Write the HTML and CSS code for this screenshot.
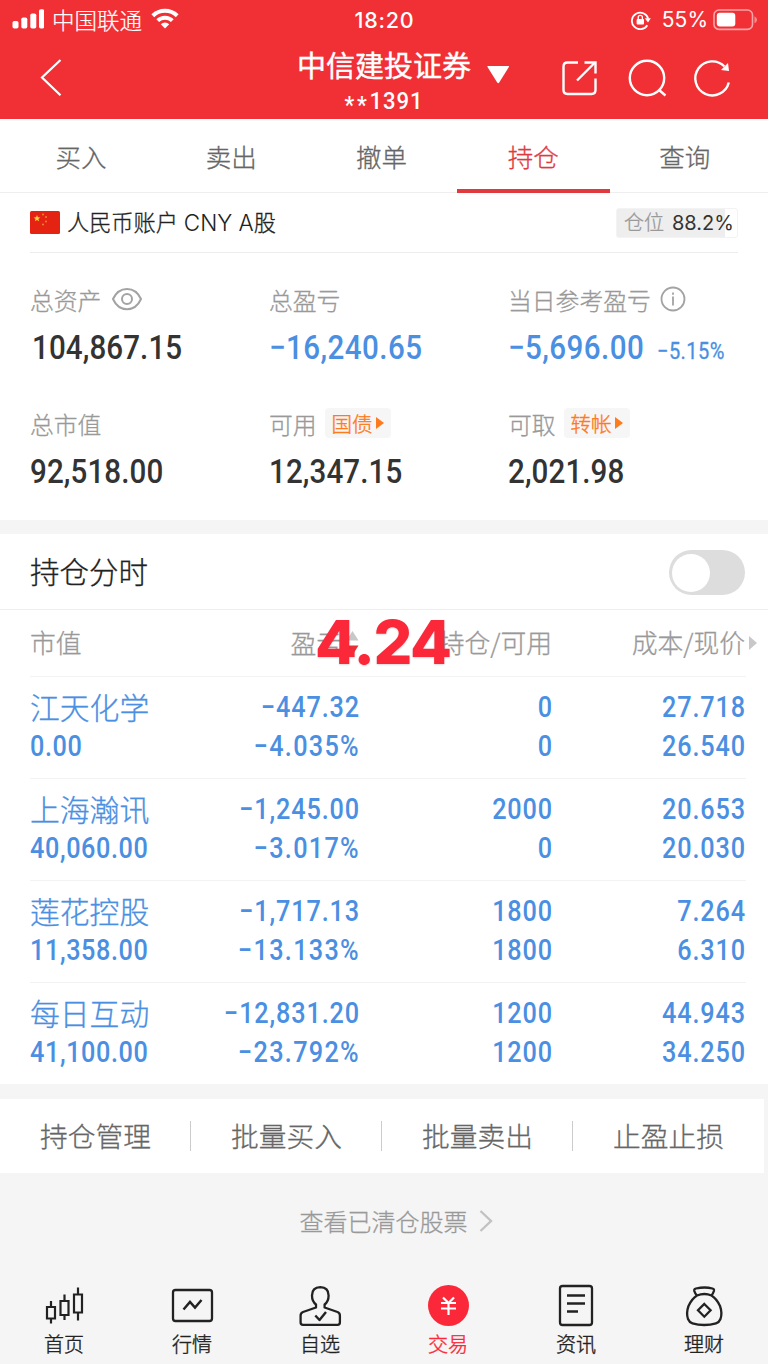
FILE: index.html
```html
<!DOCTYPE html>
<html lang="zh-CN">
<head>
<meta charset="utf-8">
<title>持仓</title>
<link rel="stylesheet" href="styles.css">
</head>
<body>
<div class="app">
  <header class="header">
    <div class="status">
      <div class="status-left">
        <svg class="ic" width="32" height="20" viewBox="12 9 32 20" fill="#fff"><rect x="12.5" y="21" width="6" height="7.5" rx="1.8"/><rect x="21.3" y="17.5" width="6" height="11" rx="1.8"/><rect x="30.3" y="13.5" width="6" height="15" rx="1.8"/><rect x="39" y="9.3" width="5.3" height="19.2" rx="1.8"/></svg>
        <span class="carrier">中国联通</span>
        <svg class="wifi" width="28" height="21" viewBox="0 0 28 21" fill="none" stroke="#fff" stroke-width="4"><path d="M1.8 7.7a17.5 17.5 0 0 1 24.4 0"/><path d="M6.7 12.6a10.5 10.5 0 0 1 14.6 0"/><path d="M14 20.5l-4.2-4.3a6 6 0 0 1 8.4 0z" fill="#fff" stroke="none"/></svg>
      </div>
      <div class="clock">18:20</div>
      <div class="status-right">
        <svg class="ic" width="20" height="20" viewBox="0 0 20 20" fill="none" stroke="#fff" stroke-width="1.8"><path d="M16.300 15.200A8.300 8.300 0 1 1 17.200 8.700"/><path d="M13.800 8.200h6l-2.800 4.200z" fill="#fff" stroke="none"/><rect x="5.600" y="9" width="7.400" height="5.600" rx="1" fill="#fff" stroke="none"/><path d="M7.200 9V7.400a2.100 2.100 0 0 1 4.200 0V9" stroke-width="1.300"/></svg>
        <span class="percent">55%</span>
        <svg class="ic" width="44" height="22" viewBox="0 0 44 22" fill="none"><rect x="1" y="1" width="38.500" height="19.400" rx="5" stroke="#fba3a6" stroke-width="1.600"/><rect x="3.800" y="3.800" width="18.500" height="13.800" rx="3" fill="#fff"/><path d="M41.500 7.200v7q2.500-1 2.500-3.500t-2.500-3.500z" fill="#f98f93"/></svg>
      </div>
    </div>
    <div class="nav">
      <svg class="back" width="24" height="40" viewBox="40 58 24 40" fill="none" stroke="#fff" stroke-width="2.2"><path d="M60.5 60L42 77.5 60.5 95.3"/></svg>
      <div class="title">
        <div class="broker">中信建投证券</div>
        <div class="acct"><span class="stars">**</span>1391</div>
      </div>
      <svg class="caret" width="24" height="20" viewBox="486 64 24 20"><path d="M488 66h20.500q1 0 .4 1l-9.700 15.600q-1 1.300-2 0l-9.700-15.600q-.6-1 .5-1z" fill="#fff"/></svg>
      <svg class="tools" width="172" height="42" viewBox="560 58 172 42" fill="none" stroke="#fff" stroke-width="2.4"><path d="M578 62.500h-10.500q-4 0-4 4v23.500q0 4 4 4h24q4 0 4-4V78.500"/><path d="M577 80.500L594.500 63"/><path d="M584.500 62.500h11v11"/><circle cx="647" cy="78" r="17.200"/><path d="M658.500 89.500l7 6"/><path d="M728.800 82.500A17 17 0 1 1 724.500 66.500"/><path d="M721 70l1.500-1.500 5.500-5.500 1 8z" fill="#fff" stroke="none"/></svg>
    </div>
  </header>

  <nav class="tabs">
    <div class="tab">买入</div><div class="tab">卖出</div><div class="tab">撤单</div><div class="tab tab-on">持仓</div><div class="tab">查询</div>
  </nav>

  <section class="account">
    <svg class="flag" width="30" height="23" viewBox="0 0 30 23"><rect width="30" height="23" rx="1.500" fill="#e42313"/><path d="M7 4l.9 2.300 2.500.1-2 1.500.7 2.400L7 8.900l-2.100 1.400.7-2.400-2-1.500 2.500-.1z" fill="#ffd53a"/><g fill="#ee8a25"><circle cx="13" cy="3.500" r="1"/><circle cx="16" cy="6" r="1"/><circle cx="16" cy="10.500" r="1"/><circle cx="13" cy="13.500" r="1"/></g></svg>
    <span class="account-name">人民币账户 <span class="latin">CNY A</span>股</span>
    <span class="position"><span class="position-label">仓位</span><span class="position-value">88.2%</span></span>
  </section>

  <section class="stats">
    <div class="stat"><div class="label">总资产<svg class="eye" width="30" height="24" viewBox="0 0 30 24" fill="none" stroke="#a3a3a3" stroke-width="2"><path d="M1 12C7-1.500 23-1.500 29 12 23 25.500 7 25.500 1 12z"/><circle cx="15" cy="12" r="5"/></svg></div><div class="amount"><span class="num num-total">104,867.15</span></div></div>
    <div class="stat"><div class="label">总盈亏</div><div class="amount loss"><span class="num">−16,240.65</span></div></div>
    <div class="stat"><div class="label">当日参考盈亏<svg class="info" width="26" height="26" viewBox="0 0 26 26" fill="none" stroke="#a3a3a3" stroke-width="1.800"><circle cx="13" cy="13" r="11.500"/><path d="M13 10.500v9M13 6.500v2.200"/></svg></div><div class="amount loss"><span class="num num-day">−5,696.00</span><span class="num pct">−5.15%</span></div></div>
    <div class="stat"><div class="label">总市值</div><div class="amount"><span class="num">92,518.00</span></div></div>
    <div class="stat"><div class="label">可用<span class="chip">国债<i class="chip-arrow"></i></span></div><div class="amount"><span class="num">12,347.15</span></div></div>
    <div class="stat"><div class="label">可取<span class="chip">转帐<i class="chip-arrow"></i></span></div><div class="amount"><span class="num">2,021.98</span></div></div>
  </section>

  <section class="switch-row">
    <span class="switch-label">持仓分时</span>
    <span class="switch"><span class="knob"></span></span>
  </section>

  <section class="table">
    <div class="row head">
      <div class="cell">市值</div>
      <div class="cell sort">盈亏<svg class="sorter" width="13" height="26" viewBox="0 0 13 26"><path d="M6.500 1l6 9.500H.5z" fill="#c8c8c8"/><path d="M6.500 25l6-9.500H.5z" fill="#e8303a"/></svg></div>
      <div class="cell">持仓/可用</div>
      <div class="cell">成本/现价<i class="more"></i></div>
      <div class="overlay">4.24</div>
    </div>
    <div class="row">
      <div class="cell"><div class="name">江天化学</div><div class="val">0.00</div></div>
      <div class="cell"><div class="val">−447.32</div><div class="val rate">−4.035%</div></div>
      <div class="cell"><div class="val">0</div><div class="val">0</div></div>
      <div class="cell"><div class="val">27.718</div><div class="val">26.540</div></div>
    </div>
    <div class="row">
      <div class="cell"><div class="name">上海瀚讯</div><div class="val">40,060.00</div></div>
      <div class="cell"><div class="val">−1,245.00</div><div class="val rate">−3.017%</div></div>
      <div class="cell"><div class="val">2000</div><div class="val">0</div></div>
      <div class="cell"><div class="val">20.653</div><div class="val">20.030</div></div>
    </div>
    <div class="row">
      <div class="cell"><div class="name">莲花控股</div><div class="val">11,358.00</div></div>
      <div class="cell"><div class="val">−1,717.13</div><div class="val rate">−13.133%</div></div>
      <div class="cell"><div class="val">1800</div><div class="val">1800</div></div>
      <div class="cell"><div class="val">7.264</div><div class="val">6.310</div></div>
    </div>
    <div class="row">
      <div class="cell"><div class="name">每日互动</div><div class="val">41,100.00</div></div>
      <div class="cell"><div class="val">−12,831.20</div><div class="val rate">−23.792%</div></div>
      <div class="cell"><div class="val">1200</div><div class="val">1200</div></div>
      <div class="cell"><div class="val">44.943</div><div class="val">34.250</div></div>
    </div>
  </section>

  <section class="actions">
    <div class="action">持仓管理</div><div class="action">批量买入</div><div class="action">批量卖出</div><div class="action">止盈止损</div>
  </section>

  <div class="cleared">查看已清仓股票<svg width="14" height="24" viewBox="0 0 14 24" fill="none" stroke="#c2c2c2" stroke-width="2.400"><path d="M1.500 2L12 12 1.500 22"/></svg></div>

  <footer class="tabbar">
    <div class="item"><svg width="44" height="44" viewBox="42 1284 44 44" fill="none" stroke="#222" stroke-width="2.200"><path d="M47 1307h8v11.500h-8zM51 1301v6M51 1318.500v5M60.500 1301h8v14h-8zM64.500 1294.500v6.500M64.500 1315v5M74 1294.500h8v18h-8zM78 1287.500v7M78 1312.500v8"/></svg><span>首页</span></div>
    <div class="item"><svg width="44" height="44" viewBox="170 1284 44 44" fill="none" stroke="#222" stroke-width="2.300"><rect x="173" y="1290" width="39" height="31" rx="2.500"/><path d="M183.500 1309.500l6.500-7.500 5 5.500 6.500-7.500" stroke-width="2.500"/></svg><span>行情</span></div>
    <div class="item"><svg width="44" height="44" viewBox="298 1284 44 44" fill="none" stroke="#222" stroke-width="2.300" stroke-linejoin="round"><path d="M316 1307.500v-3q-4-3-4-9 0-8 8.300-8.300 8.300.3 8.300 8.300 0 6-4 9v3l12.900 4.500q2.400 1 2.400 3.500v7q0 2.300-2.300 2.300h-34.700q-2.300 0-2.300-2.300v-7q0-2.500 2.400-3.500z"/><path d="M315.300 1315.500l4.200 4.500 6.500-8" stroke-width="2.400"/></svg><span>自选</span></div>
    <div class="item item-on"><svg width="44" height="44" viewBox="426 1284 44 44" fill="none"><circle cx="448.500" cy="1305.500" r="20.500" fill="#fb2839"/><path d="M443 1297.500l5.500 5.500 5.500-5.500M441 1303h15M441 1308.500h15M448.500 1302.500v12.500" stroke="#fff" stroke-width="2.200"/></svg><span>交易</span></div>
    <div class="item"><svg width="44" height="44" viewBox="554 1284 44 44" fill="none" stroke="#222" stroke-width="2.300"><rect x="560" y="1286" width="32" height="39" rx="2.500"/><path d="M567 1295.500h18M567 1303.500h18M567 1311.500h11"/></svg><span>资讯</span></div>
    <div class="item"><svg width="44" height="44" viewBox="682 1284 44 44" fill="none" stroke="#222" stroke-width="2.300" stroke-linejoin="round"><path d="M697 1295.500q-2-2-2.700-4.500-.4-2 1.600-2.500 9-2 16.500 0 2 .5 1.500 2.500-.7 2.500-2.500 4.500"/><path d="M697 1295.500q7.500-3 14.500 0 5 3 8.500 10.500 2.500 7 .5 13-1.200 3.200-4.500 4.300-5.500 1.700-11.800 1.700t-11.700-1.700q-3.300-1.100-4.500-4.300-2-6 .5-13 3.500-7.500 8.500-10.500z"/><path d="M704.300 1304l6.300 6.300-6.300 6.400-6.300-6.400z" stroke-linejoin="miter"/></svg><span>理财</span></div>
  </footer>
</div>
</body>
</html>
```
FILE: styles.css
```css
* { box-sizing: border-box; }
body { margin: 0; background: #fff; font-family: "Noto Sans CJK SC", sans-serif; font-weight: 300; color: #333; -webkit-text-stroke: .3px currentColor; }
svg { display: block; flex: none; }
.app { width: 768px; height: 1366px; overflow: hidden; }

.header { height: 119px; background: #f03035; color: #fff; }
.status { display: grid; grid-template-columns: 1fr 80px 1fr; height: 40px; align-items: center; padding: 0 11px 2px 12px; -webkit-text-stroke: 0; }
.status-left { display: flex; align-items: center; }
.carrier { font-size: 22.500px; line-height: 30px; margin: 0 9px 0 8px; -webkit-text-stroke: .2px currentColor; }
.wifi { margin-top: -2px; }
.clock { font: 500 21.500px/30px Inter, sans-serif; text-align: center; letter-spacing: .8px; padding-top: 2px; }
.status-right { display: flex; align-items: center; justify-content: flex-end; padding-top: 1px; }
.percent { font: 400 21px/30px Inter, sans-serif; margin: 0 5px 0 11px; }
.nav { display: flex; height: 79px; padding-left: 40px; }
.back { margin-top: 18px; }
.title { width: 180px; margin-left: 230px; text-align: center; margin-top: 4px; }
.broker { font-size: 29px; line-height: 40px; font-weight: 400; white-space: nowrap; -webkit-text-stroke: .4px currentColor; }
.acct { margin-top: 2px; font: 500 24px/30px Roboto, sans-serif; letter-spacing: 1px; transform: scaleX(.92); -webkit-text-stroke: 0; }
.stars { display: inline-block; letter-spacing: 3px; transform: translateY(4px); }
.caret { margin: 24px 0 0 12px; }
.tools { margin: 18px 0 0 50px; }

.tabs { display: flex; height: 74px; border-bottom: 1px solid #eee; padding: 0 8px 0 6px; }
.tab { flex: 1; text-align: center; font-size: 25.500px; line-height: 73px; color: #666; }
.tab-on { flex: 0 0 153px; color: #e03a40; height: 74px; border-bottom: 4px solid #e03a40; }

.account { display: flex; align-items: center; height: 60px; margin: 0 30px; border-bottom: 1px solid #eee; }
.account-name { margin: -2px 0 0 7px; font-size: 22.200px; line-height: 32px; color: #222; white-space: nowrap; }
.latin { margin-left: 1px; font-size: 22.500px; font-family: Inter, sans-serif; -webkit-text-stroke: 0; }
.position { display: flex; align-items: center; width: 122px; height: 30px; margin-left: auto; padding-left: 7px; border: 1px solid #f3f3f3; border-radius: 3px; background: linear-gradient(90deg, #eee 108px, #fff 108px); }
.position-label { font-size: 20px; line-height: 28px; margin-top: -1px; color: #999; }
.position-value { font: 400 20px/28px Inter, sans-serif; margin-left: 8px; -webkit-text-stroke: 0; }

.stats { display: grid; grid-template-columns: 239px 239px 1fr; grid-auto-rows: 124px; height: 267px; padding: 29px 0 0 30px; }
.label { display: flex; align-items: center; height: 34px; font-size: 23.800px; color: #999; white-space: nowrap; }
.eye { margin-left: 11px; }
.info { margin-left: 9px; }
.amount { display: flex; align-items: baseline; height: 44px; margin-top: 9px; }
.num { font: 500 34px/44px Roboto, sans-serif; letter-spacing: .1px; transform: scaleX(.87); transform-origin: 0 50%; white-space: nowrap; -webkit-text-stroke: 0; }
.num-total { margin-left: 2px; }
.loss { color: #4a8fe2; }
.loss .num { letter-spacing: .5px; }
.num-day { width: 149px; }
.loss .pct { font-size: 23px; font-weight: 400; -webkit-text-stroke: .3px currentColor; }
.chip { display: flex; align-items: center; height: 30px; margin-left: 8px; padding: 0 7px; border-radius: 4px; background: #f6f6f6; color: #ff7a1c; font-size: 20.500px; line-height: 28px; -webkit-text-stroke: .4px currentColor; }
.chip-arrow { margin-left: 3px; border: solid transparent; border-width: 6px 0 6px 8px; border-left-color: #ff7a1c; }

.switch-row { display: flex; align-items: center; justify-content: space-between; height: 90px; padding: 0 23px 0 30px; border-top: 14px solid #f5f5f5; border-bottom: 1px solid #eee; font-size: 29.500px; color: #222; }
.switch-label { margin-top: -3px; }
.switch { display: flex; align-items: center; width: 76px; height: 45px; margin-top: 2px; padding-left: 3px; border-radius: 23px; background: #ddd; }
.knob { width: 38px; height: 38px; border-radius: 50%; background: #fff; }

.table { height: 474px; color: #4a8fe2; }
.row { display: grid; grid-template-columns: 160px 169px 193px 193px; height: 102px; margin-left: 30px; width: 716px; border-bottom: 1px solid #f3f3f3; padding-top: 11px; }
.row:last-child { border-bottom: 0; }
.cell { text-align: right; }
.cell:first-child { text-align: left; }
.head { position: relative; height: 67px; padding-top: 0; color: #999; font-size: 25.800px; line-height: 64px; }
.head .cell { position: relative; height: 66px; white-space: nowrap; }
.sort { display: flex; align-items: center; justify-content: flex-end; }
.sorter { margin-left: 4px; }
.more { position: absolute; left: 100%; top: 26px; margin-left: 4px; border: solid transparent; border-width: 7px 0 7px 8px; border-left-color: #c8c8c8; }
.overlay { position: absolute; left: 285px; top: -3px; font: 800 61px/70px Inter, sans-serif; letter-spacing: -1.500px; color: #fb2839; text-shadow: 0 1px 2px rgba(0,0,0,.15); -webkit-text-stroke: 0; }
.name { font-size: 29.800px; line-height: 36px; height: 39px; }
.val { font: 500 29px/39px Roboto, sans-serif; letter-spacing: 1px; margin-right: -1px; transform: scaleX(.87); transform-origin: 100% 50%; white-space: nowrap; -webkit-text-stroke: 0; }
.rate { letter-spacing: 1.500px; }
.cell:first-child .val { transform-origin: 0 50%; letter-spacing: .7px; }

.actions { display: flex; height: 89px; border-top: 15px solid #f5f5f5; padding-right: 4px; background: linear-gradient(90deg, #fff 764px, #f5f5f5 764px); }
.action { flex: 1; display: flex; align-items: center; justify-content: center; padding-bottom: 2px; font-size: 27.700px; line-height: 40px; color: #666; background: linear-gradient(#ccc, #ccc) 100% 50% / 1px 30px no-repeat; }
.action:last-child { background: none; }
.cleared { display: flex; justify-content: center; align-items: center; gap: 11px; height: 97px; padding: 0 0 2px 24px; background: #f5f5f5; font-size: 24px; line-height: 34px; color: #999; }
.tabbar { display: flex; height: 95px; padding-top: 14px; background: #f5f5f5; border-bottom: 1px solid #fff; }
.item { flex: 1; display: flex; flex-direction: column; align-items: center; font-size: 20px; line-height: 32px; color: #222; -webkit-text-stroke: .4px currentColor; }
.item-on { color: #fb2839; }
```
